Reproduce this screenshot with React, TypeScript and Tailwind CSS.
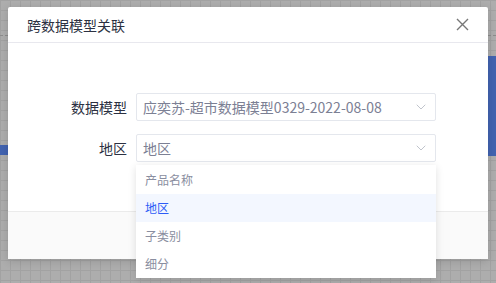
import React from 'react';

const FONT = "font-['Noto_Sans_CJK_SC','Noto_Sans',sans-serif]";

const options = ['产品名称', '地区', '子类别', '细分'];

const Chevron: React.FC = () => (
  <svg width="10" height="6" viewBox="0 0 10 6" fill="none" className="shrink-0">
    <path d="M1 1l4 4 4-4" stroke="#c0c4cc" strokeWidth="1" strokeLinecap="round" strokeLinejoin="round" />
  </svg>
);

const SelectBox: React.FC<{ value: string }> = ({ value }) => (
  <div className="w-[300px] h-[28px] flex items-center justify-between pl-[6px] pr-[9px] border border-[#e4e7ed] rounded-[2px] bg-white">
    <span className="text-[14px] leading-none text-[#7c8094] whitespace-nowrap">{value}</span>
    <Chevron />
  </div>
);

const App: React.FC = () => {
  return (
    <div
      className={`${FONT} relative w-[496px] h-[283px] overflow-hidden bg-[#adadad] bg-[linear-gradient(#a2a2a2_1px,transparent_1px),linear-gradient(90deg,#a2a2a2_1px,transparent_1px)] bg-[size:10px_10px]`}
    >
      {/* page behind the mask */}
      <div className="absolute left-0 top-[145px] w-[8px] h-[10px] bg-[#4263b0]" />
      <div className="absolute left-[488px] top-[56px] w-[8px] h-[100px] bg-[#4263b0]" />
      <div className="absolute left-0 top-[35px] w-[8px] border-t border-dashed border-[#8c8c8c]" />
      <div className="absolute left-[488px] top-[35px] w-[8px] border-t border-dashed border-[#8c8c8c]" />

      {/* modal */}
      <div className="absolute left-[8px] top-[7px] w-[480px] bg-white rounded-[2px] shadow-[0_2px_8px_rgba(0,0,0,0.15)] flex flex-col">
        <div className="h-[36px] flex items-center justify-between pl-[19px] pr-[19px] border-b border-[#e8e8ee]">
          <span className="text-[14px] text-[#2c3142] leading-none">跨数据模型关联</span>
          <svg width="13" height="13" viewBox="0 0 13 13" fill="none">
            <path d="M1 1l11 11M12 1L1 12" stroke="#777" strokeWidth="1.4" />
          </svg>
        </div>
        <div className="h-[168px] pt-[50px] flex flex-col gap-[13px]">
          <div className="flex items-center">
            <span className="w-[119px] pr-[0px] text-right text-[14px] text-[#2c3142] leading-none">数据模型</span>
            <div className="ml-[9px]">
              <SelectBox value="应奕苏-超市数据模型0329-2022-08-08" />
            </div>
          </div>
          <div className="flex items-center">
            <span className="w-[119px] text-right text-[14px] text-[#2c3142] leading-none">地区</span>
            <div className="ml-[9px]">
              <SelectBox value="地区" />
            </div>
          </div>
        </div>
        <div className="h-[48px] bg-[#fafafa] border-t border-[#ebebeb]" />
      </div>

      {/* dropdown */}
      <div className="absolute left-[136px] top-[165px] w-[300px] pt-px bg-white shadow-[0_2px_8px_rgba(0,0,0,0.12)] flex flex-col">
        {options.map((o) => (
          <div
            key={o}
            className={`h-[28px] flex items-center pl-[9px] text-[12px] leading-none ${
              o === '地区' ? 'bg-[#f3f7ff] text-[#2d5cf6]' : 'text-[#8a8ea0]'
            }`}
          >
            {o}
          </div>
        ))}
      </div>
    </div>
  );
};

export default App;
